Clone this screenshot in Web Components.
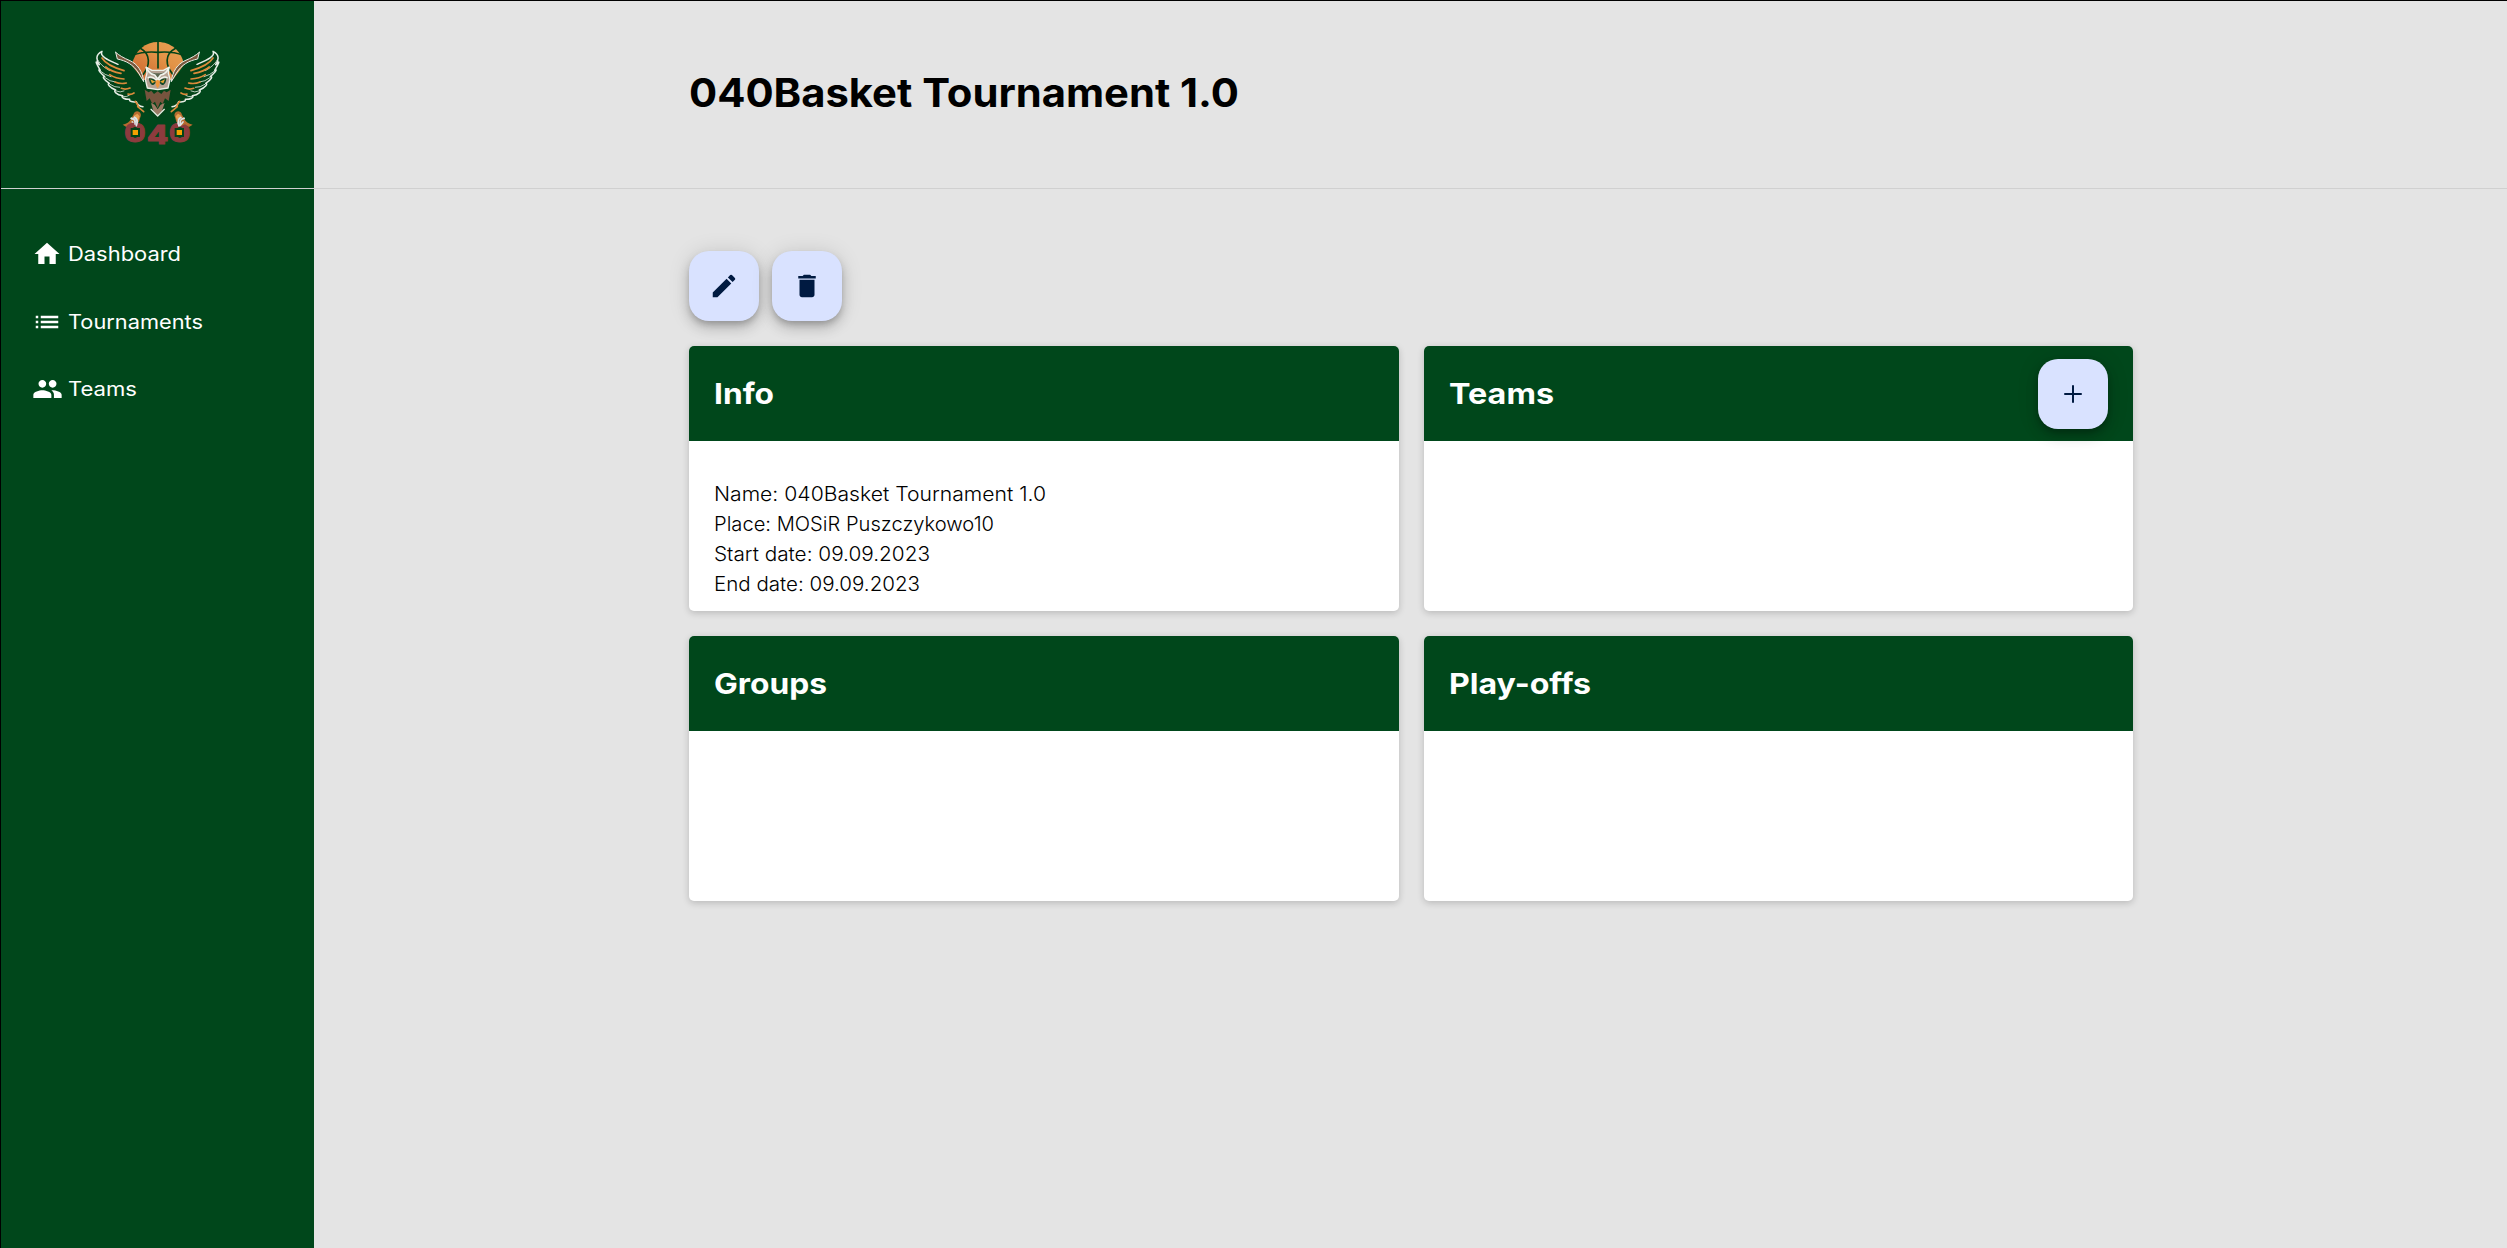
<!DOCTYPE html>
<html lang="en"><head><meta charset="utf-8"><title>040Basket Tournament 1.0</title>
<style>
html,body{margin:0;height:100%}
body{font-family:Inter,"Open Sans",sans-serif;background:#e4e4e4;--green:#00471b;--fab:#d9e2ff;--ink:#001a41;overflow:hidden}
</style></head><body>
<tournament-app></tournament-app>
<script>
const define=(name,html,setup)=>{
  const t=document.createElement('template');t.innerHTML=html;
  customElements.define(name,class extends HTMLElement{
    constructor(){super();this.attachShadow({mode:'open'}).append(t.content.cloneNode(true));}
    connectedCallback(){if(setup)setup.call(this,this.shadowRoot);}
  });
};
const icons={
 home:['0 0 24 24','M10 20v-6h4v6h5v-8h3L12 3 2 12h3v8z',30,30],
 list:['0 0 24 24','M3 13h2v-2H3v2zm0 4h2v-2H3v2zm0-8h2V7H3v2zm4 4h14v-2H7v2zm0 4h14v-2H7v2zM7 7v2h14V7H7z',30,30],
 group:['1 5 22 14','M16 11c1.66 0 2.99-1.34 2.99-3S17.66 5 16 5s-3 1.34-3 3 1.34 3 3 3zm-8 0c1.66 0 2.99-1.34 2.99-3S9.66 5 8 5 5 6.34 5 8s1.34 3 3 3zm0 2c-2.33 0-7 1.17-7 3.5V19h14v-2.5C15 14.17 10.33 13 8 13zm8 0c-.29 0-.62.02-.97.05 1.16.84 1.97 1.97 1.97 3.45V19h6v-2.5c0-2.33-4.67-3.5-7-3.5z',29,18],
 edit:['0 0 24 24','M3 17.25V21h3.75L17.81 9.94l-3.75-3.75L3 17.25zM20.71 7.04a1 1 0 0 0 0-1.41l-2.34-2.34a1 1 0 0 0-1.41 0l-1.83 1.83 3.75 3.75 1.83-1.83z',30,30],
 delete:['0 0 24 24','M6 19c0 1.1.9 2 2 2h8c1.1 0 2-.9 2-2V7H6v12zM19 4h-3.5l-1-1h-5l-1 1H5v2h14V4z',30,30],
 add:['0 0 24 24','M19 12.8h-6.2V19h-1.6v-6.2H5v-1.6h6.2V5h1.6v6.2H19z',30,30]
};
define('app-icon','<style>:host{display:flex;align-items:center;justify-content:center;width:30px;height:30px;flex:none}svg{flex:none;fill:currentColor}</style><svg><path/></svg>',function(r){
  const [vb,d,w,h]=icons[this.getAttribute('name')],s=r.querySelector('svg');
  s.setAttribute('viewBox',vb);s.setAttribute('width',w);s.setAttribute('height',h);r.querySelector('path').setAttribute('d',d);
});
/* Text widened or narrowed to fill the advance given by its width attribute. */
define('fit-text','<style>:host{display:block;white-space:nowrap}span{display:inline-block;transform-origin:0 50%}</style><span><slot></slot></span>',function(r){
  const s=r.querySelector('span'),w=s.getBoundingClientRect().width;
  s.style.transform='scaleX('+(+this.getAttribute('width')/w)+')';
});
define('fab-button','<style>:host{display:block;flex:none}button{display:flex;align-items:center;justify-content:center;width:70px;height:70px;padding:0;border:0;border-radius:20px;background:var(--fab);color:var(--ink);box-shadow:0 3.75px 6.25px -1.25px #0003,0 7.5px 12.5px #00000024,0 1.25px 22.5px #0000001f}</style><button><slot></slot></button>');
define('nav-item','<style>:host{display:flex;align-items:center;gap:6px;height:30px;color:#fff;font-size:19.6px;line-height:30px}</style><slot></slot>');
define('info-card',`<style>:host{display:flex;flex-direction:column;height:265px;border-radius:5px;background:#fff;box-shadow:0 2px 7px #00000030}
header{display:flex;align-items:center;justify-content:space-between;height:95px;box-sizing:border-box;padding:0 25px;border-radius:5px 5px 0 0;background:var(--green);color:#fff}
h2{margin:0;font-size:29px;line-height:45px;font-weight:700}
.body{padding:38px 25px 0;font-size:19.6px;line-height:30px;font-weight:330;color:#000}</style>
<header><h2><slot name="title"></slot></h2><slot name="action"></slot></header><div class="body"><slot></slot></div>`);
define('team-logo',`<style>:host{display:block;width:145px;height:125px}svg{display:block}text{font-family:Inter,sans-serif;font-weight:800}</style>
<svg width="145" height="125" viewBox="0 0 435 375" stroke-linejoin="round" stroke-linecap="round">
<defs><linearGradient id="b" x1="0" y1="1" x2="1" y2="0"><stop stop-color="#c9602c"/><stop offset=".6" stop-color="#e39447"/><stop offset="1" stop-color="#e8a156"/></linearGradient></defs>
<path d="M140 106C150 60 182 36 219 36s70 25 78 68l-34 46H174z" fill="url(#b)"/>
<path d="M219 36v78M142 76q36-13 77-9 42-4 76 9M166 55c32 18 29 51 9 78M272 55c-35 18-30 51-9 78" fill="none" stroke="#034318" stroke-width="5"/>
<g id="wing">
<path d="M176 158C148 112 110 105 72 86 54 78 45 70 51 64c-21 10-17 27-8 40-13-14-13-10 3 17-7-5-7 1 13 19-8-2-4 9 14 20-8 0 0 13 19 20-8 3 2 14 21 17-7 5 7 12 21 11-3 6 10 9 20 7 3 10 10 14 20 15l24-20z" fill="#034318"/>
<path d="M99 103C72 91 42 79 51 64c-21 10-17 27-8 40-13-14-13-10 3 17-7-5-7 1 13 19-8-2-4 9 14 20-8 0 0 13 19 20-8 3 2 14 21 17-7 5 7 12 21 11-3 6 10 9 20 7 3 10 10 14 20 15" fill="none" stroke="#e6eee6" stroke-width="4.5"/>
<path d="M36 86q10 21 38 36M46 123q13 12 32 17M60 143q15 12 31 13M75 163q14 10 29 9M93 183q13 6 24 0M113 200q12 2 20-4" stroke="#d9e5da" stroke-width="2.5" fill="none"/>
<path d="M51 84q14 23 66 38M62 111q16 14 46 19M74 134q18 12 43 13M90 156q16 7 34 3M109 175q12 5 26-1M129 192q9 3 18-3M151 214q7 8 9 17M158 230l18 15" stroke="#dc8b3b" stroke-width="5" fill="none"/>
<path d="M92 67l5 20c26 5 48 17 64 42l15 26c-3-31-19-53-41-63C116 84 102 76 92 67z" fill="#79583d" stroke="#e6eee6" stroke-width="3"/>
</g>
<use href="#wing" transform="matrix(-1 0 0 1 435 0)"/>
<path d="M178 170h79l5 47-18 27-27 26-27-24-17-29z" fill="#034318"/>
<path d="M179 179l12 8 8-5 8 10 11-8 11 8 8-10 8 5 12-8-6 34-11-8-7 17-7-7-8 20-8-20-8 7-8-17-9 8z" fill="#77543e"/>
<path d="M198 219l11 5 9 14 9-14 12-5-8 23-13 14-13-14z" fill="#9c7b66"/>
<path d="M198 238l20 20 20-20" fill="none" stroke="#e8ede3" stroke-width="4"/>
<path d="M184 112l17 9h34l17-9-2 17 5 19-6 26-31 5-31-5-6-26 5-19z" fill="#b6a394" stroke="#edf1e9" stroke-width="4"/>
<path d="M190 123q8 11 20 12l8 8 8-8q12-1 20-12-12 7-22 7h-12q-11 0-22-7z" fill="#5c6650"/>
<path d="M184 112q8 20 25 23l9 13 9-13q17-3 25-23M190 143q9-7 28 10 19-17 28-10" fill="none" stroke="#f0f3ec" stroke-width="5"/>
<path d="M192 145q15 0 22 10-5 10-13 10-9-6-9-20zM244 145q-15 0-22 10 5 10 13 10 9-6 9-20z" fill="#13482a"/>
<path d="M196 148l15 7-10 5zM240 148l-15 7 10 5z" fill="#e8a633"/>
<path d="M211 153l7-4 7 4-2 14-5 8-5-8z" fill="#ed963b"/>
<g id="claw"><path d="M113 284q20-5 25-17l7-13q5-13 17-9 9 6 4 17l-4 13-12 14-14-6-12 8z" fill="#b66c30"/>
<path d="M147 257l10-6 7 8-4 12z" fill="#e6a052"/>
<path d="M139 265q14 2 11 17M148 262q13 7 6 25M142 276l8 10" fill="none" stroke="#dce3e8" stroke-width="5"/></g>
<g fill="#8d3b3e" stroke="#8d3b3e" stroke-width="3" font-size="77"><text x="118" y="335" textLength="64" lengthAdjust="spacingAndGlyphs">0</text><text x="186" y="343" textLength="64" lengthAdjust="spacingAndGlyphs">4</text><text x="252" y="335" textLength="64" lengthAdjust="spacingAndGlyphs">0</text></g>
<path d="M137 294h28v27h-28zM269 294h28v27h-28z" fill="#034318"/><path d="M143 300h16v15h-16zM275 300h16v15h-16z" fill="#f6a000"/>
<path d="M139 265q14 2 11 17M148 262q13 7 6 25M297 265q-14 2-11 17M288 262q-13 7-6 25" fill="none" stroke="#dce3e8" stroke-width="5"/>
<use href="#claw" transform="matrix(-1 0 0 1 436 0)"/>
</svg>`);
define('side-bar',`<style>:host{display:block;width:313px;background:var(--green);flex:none}.brand{height:188px;display:flex;justify-content:center;align-items:flex-start;padding-top:29px;box-sizing:border-box;border-bottom:1px solid #d0d0d0}nav{display:flex;flex-direction:column;gap:37.5px;padding:50px 0 0 31px}</style>
<div class="brand"><team-logo></team-logo></div><nav>
<nav-item><app-icon name="home"></app-icon><fit-text width="113">Dashboard</fit-text></nav-item>
<nav-item><app-icon name="list"></app-icon><fit-text width="135">Tournaments</fit-text></nav-item>
<nav-item><app-icon name="group"></app-icon><fit-text width="69">Teams</fit-text></nav-item></nav>`);
define('page-header',`<style>:host{display:flex;align-items:center;height:188px;box-sizing:border-box;padding:0 0 3px 375px;border-bottom:1px solid #d0d0d0}h1{margin:0;font-size:39.5px;line-height:60px;font-weight:700;color:#000}</style><h1><slot></slot></h1>`);
define('tournament-app',`<style>:host{display:flex;height:100vh;box-sizing:border-box;border:solid #000;border-width:1px 0 0 1px}
main{flex:1;min-width:0}.content{padding:62px 0 0 375px;width:1444px}.actions{display:flex;gap:13px;height:70px;margin-bottom:25px}.grid{display:grid;grid-template-columns:710px 709px;gap:25px}</style>
<side-bar></side-bar><main><page-header><fit-text width="550">040Basket Tournament 1.0</fit-text></page-header>
<div class="content"><div class="actions"><fab-button><app-icon name="edit"></app-icon></fab-button><fab-button><app-icon name="delete"></app-icon></fab-button></div>
<div class="grid">
<info-card><fit-text slot="title" width="60">Info</fit-text>
<fit-text width="332">Name: 040Basket Tournament 1.0</fit-text><fit-text width="280">Place: MOSiR Puszczykowo10</fit-text><fit-text width="216">Start date: 09.09.2023</fit-text><fit-text width="206">End date: 09.09.2023</fit-text></info-card>
<info-card><fit-text slot="title" width="105">Teams</fit-text><fab-button slot="action"><app-icon name="add"></app-icon></fab-button></info-card>
<info-card><fit-text slot="title" width="113">Groups</fit-text></info-card>
<info-card><fit-text slot="title" width="142">Play-offs</fit-text></info-card>
</div></div></main>`);
</script></body></html>
